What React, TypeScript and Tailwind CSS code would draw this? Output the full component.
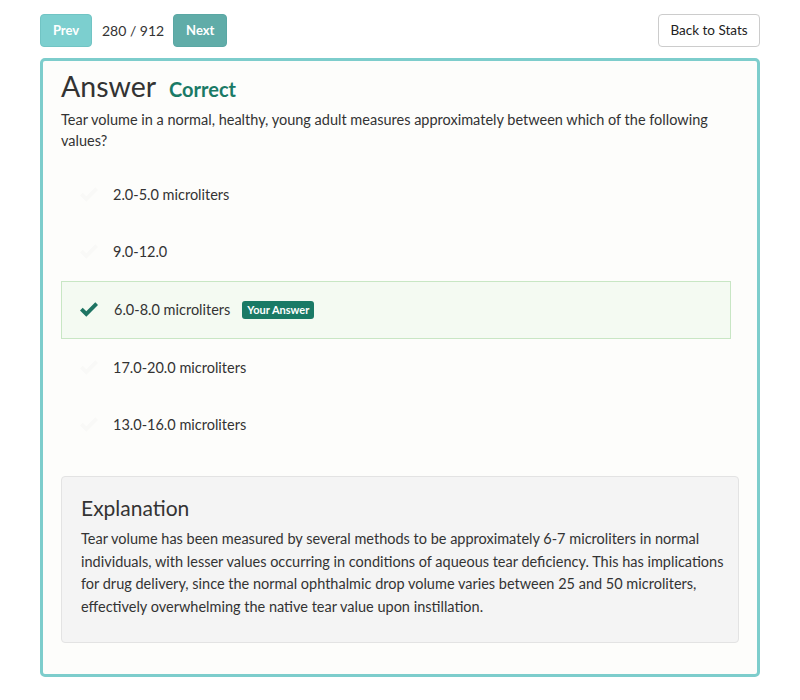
const options = [
  { text: "2.0-5.0 microliters", selected: false },
  { text: "9.0-12.0", selected: false },
  { text: "6.0-8.0 microliters", selected: true },
  { text: "17.0-20.0 microliters", selected: false },
  { text: "13.0-16.0 microliters", selected: false },
];

const explanation = [
  "Tear volume has been measured by several methods to be approximately 6-7 microliters in normal",
  "individuals, with lesser values occurring in conditions of aqueous tear deficiency. This has implications",
  "for drug delivery, since the normal ophthalmic drop volume varies between 25 and 50 microliters,",
  "effectively overwhelming the native tear value upon instillation.",
];

function Check({ className }: { className?: string }) {
  return (
    <svg viewBox="0 0 24 20" className={className} fill="currentColor">
      <path d="M2 10.5 L5 7.5 L9 11.5 L19 1.5 L22 4.5 L9 17.5 Z" />
    </svg>
  );
}

export default function App() {
  return (
    <div className="min-h-[700px] bg-white px-10 pt-[14px] text-[#333] font-['Lato',_'Open_Sans',_sans-serif]">
      <div className="flex items-center justify-between">
        <div className="flex items-center">
          <button className="h-[33px] w-[52px] rounded border border-[#71c4c4] bg-[#7ccfcf] text-[13px] font-bold text-white">
            Prev
          </button>
          <span className="ml-[10px] text-[14px]">280 / 912</span>
          <button className="ml-[9px] h-[33px] w-[54px] rounded border border-[#5aa7a4] bg-[#60aca8] text-[13px] font-bold text-white">
            Next
          </button>
        </div>
        <button className="h-[33px] w-[102px] rounded border border-[#ccc] bg-white text-[13.5px] text-[#222]">
          Back to Stats
        </button>
      </div>

      <div className="mt-[11px] rounded-[5px] border-[3px] border-[#7dcdcc] bg-[#fdfdfb] pl-[18px] pr-[18px] pb-[31px]">
        <div className="flex items-end pt-[6px]">
          <h1 className="text-[28.5px] leading-[38px] text-[#333]">Answer</h1>
          <span className="ml-[13px] mb-[1px] text-[20px] font-bold text-[#1a7a66]">Correct</span>
        </div>
        <p className="mt-[4px] text-[14.5px] leading-[21px]">
          Tear volume in a normal, healthy, young adult measures approximately between which of the following values?
        </p>
        <div className="mt-[15px] mr-[8px]">
          {options.map((o, i) =>
            o.selected ? (
              <div
                key={o.text}
                className="flex h-[58px] items-center border border-[#c8e6c4] bg-[#f4faf2] pl-[16px]"
              >
                <Check className="h-[18px] w-[22px] text-[#1e7463]" />
                <span className="ml-[14px] text-[14.5px]">{o.text}</span>
                <span className="ml-[12px] rounded-[3px] bg-[#1a7a66] px-[5px] py-[1px] text-[11px] font-bold text-white">
                  Your Answer
                </span>
              </div>
            ) : (
              <div
                key={o.text}
                className={`flex items-center border border-transparent pl-[16px] ${i === 1 ? "h-[58px]" : "h-[57px]"}`}
              >
                <Check className="h-[18px] w-[22px] text-[#f9f9f7]" />
                <span className="ml-[13px] text-[14.5px]">{o.text}</span>
              </div>
            )
          )}
        </div>

        <div className="mt-[23px] rounded border border-[#e3e3e3] bg-[#f4f4f4] px-[19px] pt-[17px] pb-[23px]">
          <h2 className="text-[21px] leading-[28px] text-[#333]">Explanation</h2>
          <p className="mt-[6px] whitespace-nowrap text-[14.5px] leading-[22.7px]">
            {explanation.map((line, i) => (
              <span key={i} className="block">
                {line}
              </span>
            ))}
          </p>
        </div>
      </div>
    </div>
  );
}
